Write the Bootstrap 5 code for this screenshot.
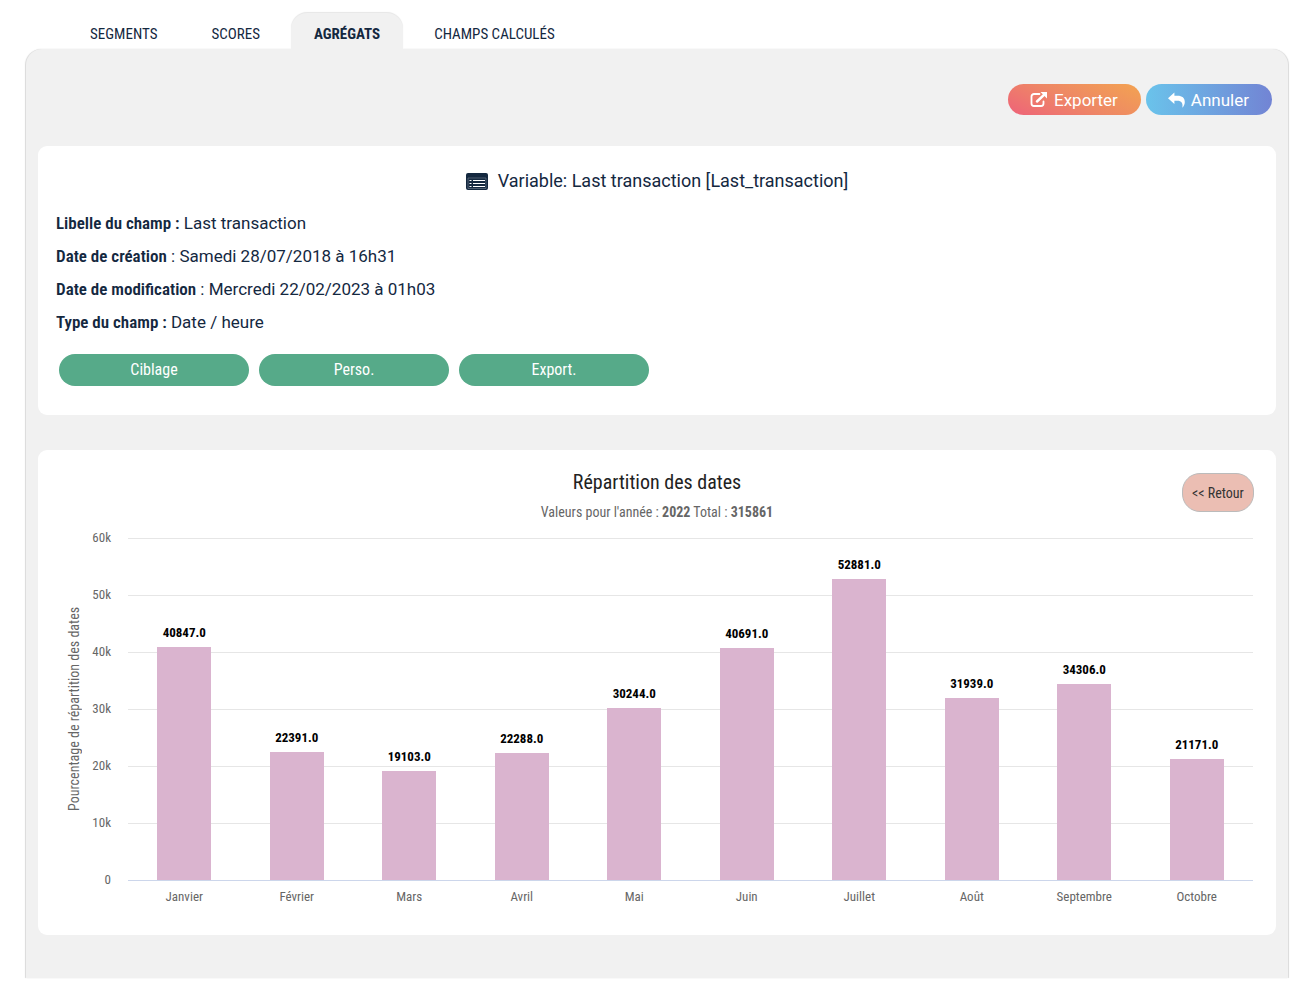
<!DOCTYPE html>
<html lang="fr">
<head>
<meta charset="utf-8">
<meta name="viewport" content="width=device-width, initial-scale=1">
<title>Agrégats</title>
<link rel="stylesheet" href="https://cdn.jsdelivr.net/npm/bootstrap@5.3.0/dist/css/bootstrap.min.css">
<style>
:root { --cond: "Roboto Condensed", "Liberation Sans Narrow", Roboto, sans-serif; --ink: #14283f; }
body { font-family: Roboto, sans-serif; color: var(--ink); background: #fff; }
.page { padding: 13px 10px 12px 26px; }
.tabs { padding-left: 41px; gap: 8px; }
.tabs .nav-link { font-family: var(--cond); font-size: 15px; line-height: 20px; color: var(--ink); padding: 11px 23px 5px; border-radius: 16px 16px 0 0; }
.tabs .nav-link.active { font-weight: 700; background: #f1f1f1; box-shadow: 0 -1px 1px #e6e6e6; }
.panel { background: #f1f1f1; border-radius: 16px 16px 0 0; box-shadow: 1px 0 1px #dadada, -1px 0 1px #dadada; padding: 35px 12px 43px; }
.actions { gap: 5px; padding-right: 4px; margin-bottom: 31px; }
.actions .btn { height: 31px; border: 0; border-radius: 16px; color: #fff; font-size: 17px; line-height: 20px; padding: 0 23px 0 22px; gap: 6px; }
.act-export { background: linear-gradient(25deg, #ee6279, #ee8865 50%, #f3a351); }
.act-cancel { background: linear-gradient(90deg, #6ac3eb, #7284d4); }
.box { background: #fff; border-radius: 9px; }
.info { padding: 23px 18px 29px; margin-bottom: 35px; }
.info h1 { font-size: 18px; line-height: 24px; font-weight: 400; margin: 0 0 18px; gap: 10px; }
.info p { font-size: 17px; line-height: 24px; margin: 0 0 9px; }
.info strong { font-family: var(--cond); font-weight: 600; }
.chips { padding: 11px 3px 0; gap: 10px; }
.chips .btn { width: 190px; height: 32px; padding: 0; border: 0; border-radius: 16px; background: #56aa89; color: #fff; font-family: var(--cond); font-size: 16px; line-height: 32px; }
.chart { padding: 20px 23px 28px; font-family: var(--cond); position: relative; }
.chart h2 { font-size: 20px; line-height: 24px; font-weight: 400; color: #222; margin: 0; }
.chart .sub { font-size: 14px; line-height: 20px; color: #666; margin: 8px 0 16px; }
.back { position: absolute; right: 22px; top: 23px; height: 39px; width: 72px; padding: 0; border: 1px solid #bbb; border-radius: 18px; background: #ebbeb3; color: #333; font-size: 14px; line-height: 20px; }
.ytitle { writing-mode: vertical-rl; transform: rotate(180deg); margin-bottom: 28px; font-size: 14px; line-height: 18px; color: #666; text-align: center; }
.ylabels { width: 28px; height: 362px; margin-top: -10px; font-size: 13px; line-height: 20px; color: #666; text-align: right; }
.plot { height: 343px; margin-left: 17px; position: relative; }
.lines { position: absolute; inset: 0; }
.lines div { height: 1px; background: #e6e6e6; }
.lines div:last-child { background: #ccd6eb; }
.bars { position: relative; height: 342px; }
.slot { flex: 1 1 0; height: 100%; }
.slot b { font-size: 13px; line-height: 16px; color: #000; margin-bottom: 6px; }
.slot i { display: block; width: 48%; background: #dab4cf; }
.months { margin: 6px 0 0 17px; font-size: 13px; line-height: 20px; color: #666; }
.months span { flex: 1 1 0; text-align: center; }
</style>
</head>
<body>
<div class="page">
  <nav class="nav tabs">
    <a class="nav-link" href="#">SEGMENTS</a>
    <a class="nav-link" href="#">SCORES</a>
    <a class="nav-link active" href="#" aria-current="page">AGRÉGATS</a>
    <a class="nav-link" href="#">CHAMPS CALCULÉS</a>
  </nav>
  <main class="panel">
    <div class="actions d-flex justify-content-end">
      <button type="button" class="btn act-export d-flex align-items-center">
        <svg width="18" height="16" viewBox="0 0 18 16" fill="none" aria-hidden="true"><path d="M9.500 2H4a2.500 2.500 0 0 0-2.500 2.500v7A2.500 2.500 0 0 0 4 14h7a2.500 2.500 0 0 0 2.500-2.500V9.500" stroke="#fff" stroke-width="1.800" stroke-linecap="round"/><path d="M7 9.500L14 2.800" stroke="#fff" stroke-width="2.500" stroke-linecap="round"/><path d="M10.500 0H17v6.500z" fill="#fff"/></svg>
        Exporter</button>
      <button type="button" class="btn act-cancel d-flex align-items-center">
        <svg width="17" height="16" viewBox="0 0 17 16" fill="#fff" aria-hidden="true"><path d="M0 6.200L6.400.600v3.200h3.200c4.600 0 7.200 2.200 7.200 6.200 0 2-.8 3.600-1.900 5.300-.2.300-.6.200-.5-.2C15 11.200 13.600 8.700 9.200 8.700H6.400v3.200z"/></svg>
        Annuler</button>
    </div>

    <section class="box info">
      <h1 class="d-flex justify-content-center align-items-center">
        <svg width="22" height="18" viewBox="0 0 22 18" aria-hidden="true"><rect y="1" width="22" height="17" rx="2" fill="#14283f"/><path d="M2 6h18v10.500H2z" fill="none" stroke="#8793a1" stroke-width=".500"/><path d="M3.500 8.500h2M3.500 11.500h2M3.500 14.500h2M7 8.500h12M7 11.500h12M7 14.500h12" stroke="#fff" stroke-width="1.200"/></svg>
        Variable: Last transaction [Last_transaction]</h1>
      <p><strong>Libelle du champ :</strong> Last transaction</p>
      <p><strong>Date de création</strong> : Samedi 28/07/2018 à 16h31</p>
      <p><strong>Date de modification</strong> : Mercredi 22/02/2023 à 01h03</p>
      <p><strong>Type du champ :</strong> Date / heure</p>
      <div class="chips d-flex flex-wrap">
        <button type="button" class="btn">Ciblage</button>
        <button type="button" class="btn">Perso.</button>
        <button type="button" class="btn">Export.</button>
      </div>
    </section>

    <section class="box chart">
      <h2 class="text-center">Répartition des dates</h2>
      <p class="sub text-center">Valeurs pour l'année : <b>2022</b> Total : <b>315861</b></p>
      <button type="button" class="btn back">&lt;&lt; Retour</button>
      <div class="d-flex ps-1">
        <div class="ytitle">Pourcentage de répartition des dates</div>
        <div class="ylabels d-flex flex-column justify-content-between">
          <span>60k</span><span>50k</span><span>40k</span><span>30k</span><span>20k</span><span>10k</span><span>0</span>
        </div>
        <div class="flex-grow-1">
          <div class="plot">
            <div class="lines d-flex flex-column justify-content-between"><div></div><div></div><div></div><div></div><div></div><div></div><div></div></div>
            <div class="bars d-flex">
              <div class="slot d-flex flex-column justify-content-end align-items-center"><b>40847.0</b><i style="height:68.08%"></i></div>
              <div class="slot d-flex flex-column justify-content-end align-items-center"><b>22391.0</b><i style="height:37.32%"></i></div>
              <div class="slot d-flex flex-column justify-content-end align-items-center"><b>19103.0</b><i style="height:31.84%"></i></div>
              <div class="slot d-flex flex-column justify-content-end align-items-center"><b>22288.0</b><i style="height:37.15%"></i></div>
              <div class="slot d-flex flex-column justify-content-end align-items-center"><b>30244.0</b><i style="height:50.41%"></i></div>
              <div class="slot d-flex flex-column justify-content-end align-items-center"><b>40691.0</b><i style="height:67.82%"></i></div>
              <div class="slot d-flex flex-column justify-content-end align-items-center"><b>52881.0</b><i style="height:88.14%"></i></div>
              <div class="slot d-flex flex-column justify-content-end align-items-center"><b>31939.0</b><i style="height:53.23%"></i></div>
              <div class="slot d-flex flex-column justify-content-end align-items-center"><b>34306.0</b><i style="height:57.18%"></i></div>
              <div class="slot d-flex flex-column justify-content-end align-items-center"><b>21171.0</b><i style="height:35.29%"></i></div>
            </div>
          </div>
          <div class="months d-flex">
            <span>Janvier</span><span>Février</span><span>Mars</span><span>Avril</span><span>Mai</span><span>Juin</span><span>Juillet</span><span>Août</span><span>Septembre</span><span>Octobre</span>
          </div>
        </div>
      </div>
    </section>
  </main>
</div>
<script src="https://cdn.jsdelivr.net/npm/bootstrap@5.3.0/dist/js/bootstrap.bundle.min.js"></script>
</body>
</html>
